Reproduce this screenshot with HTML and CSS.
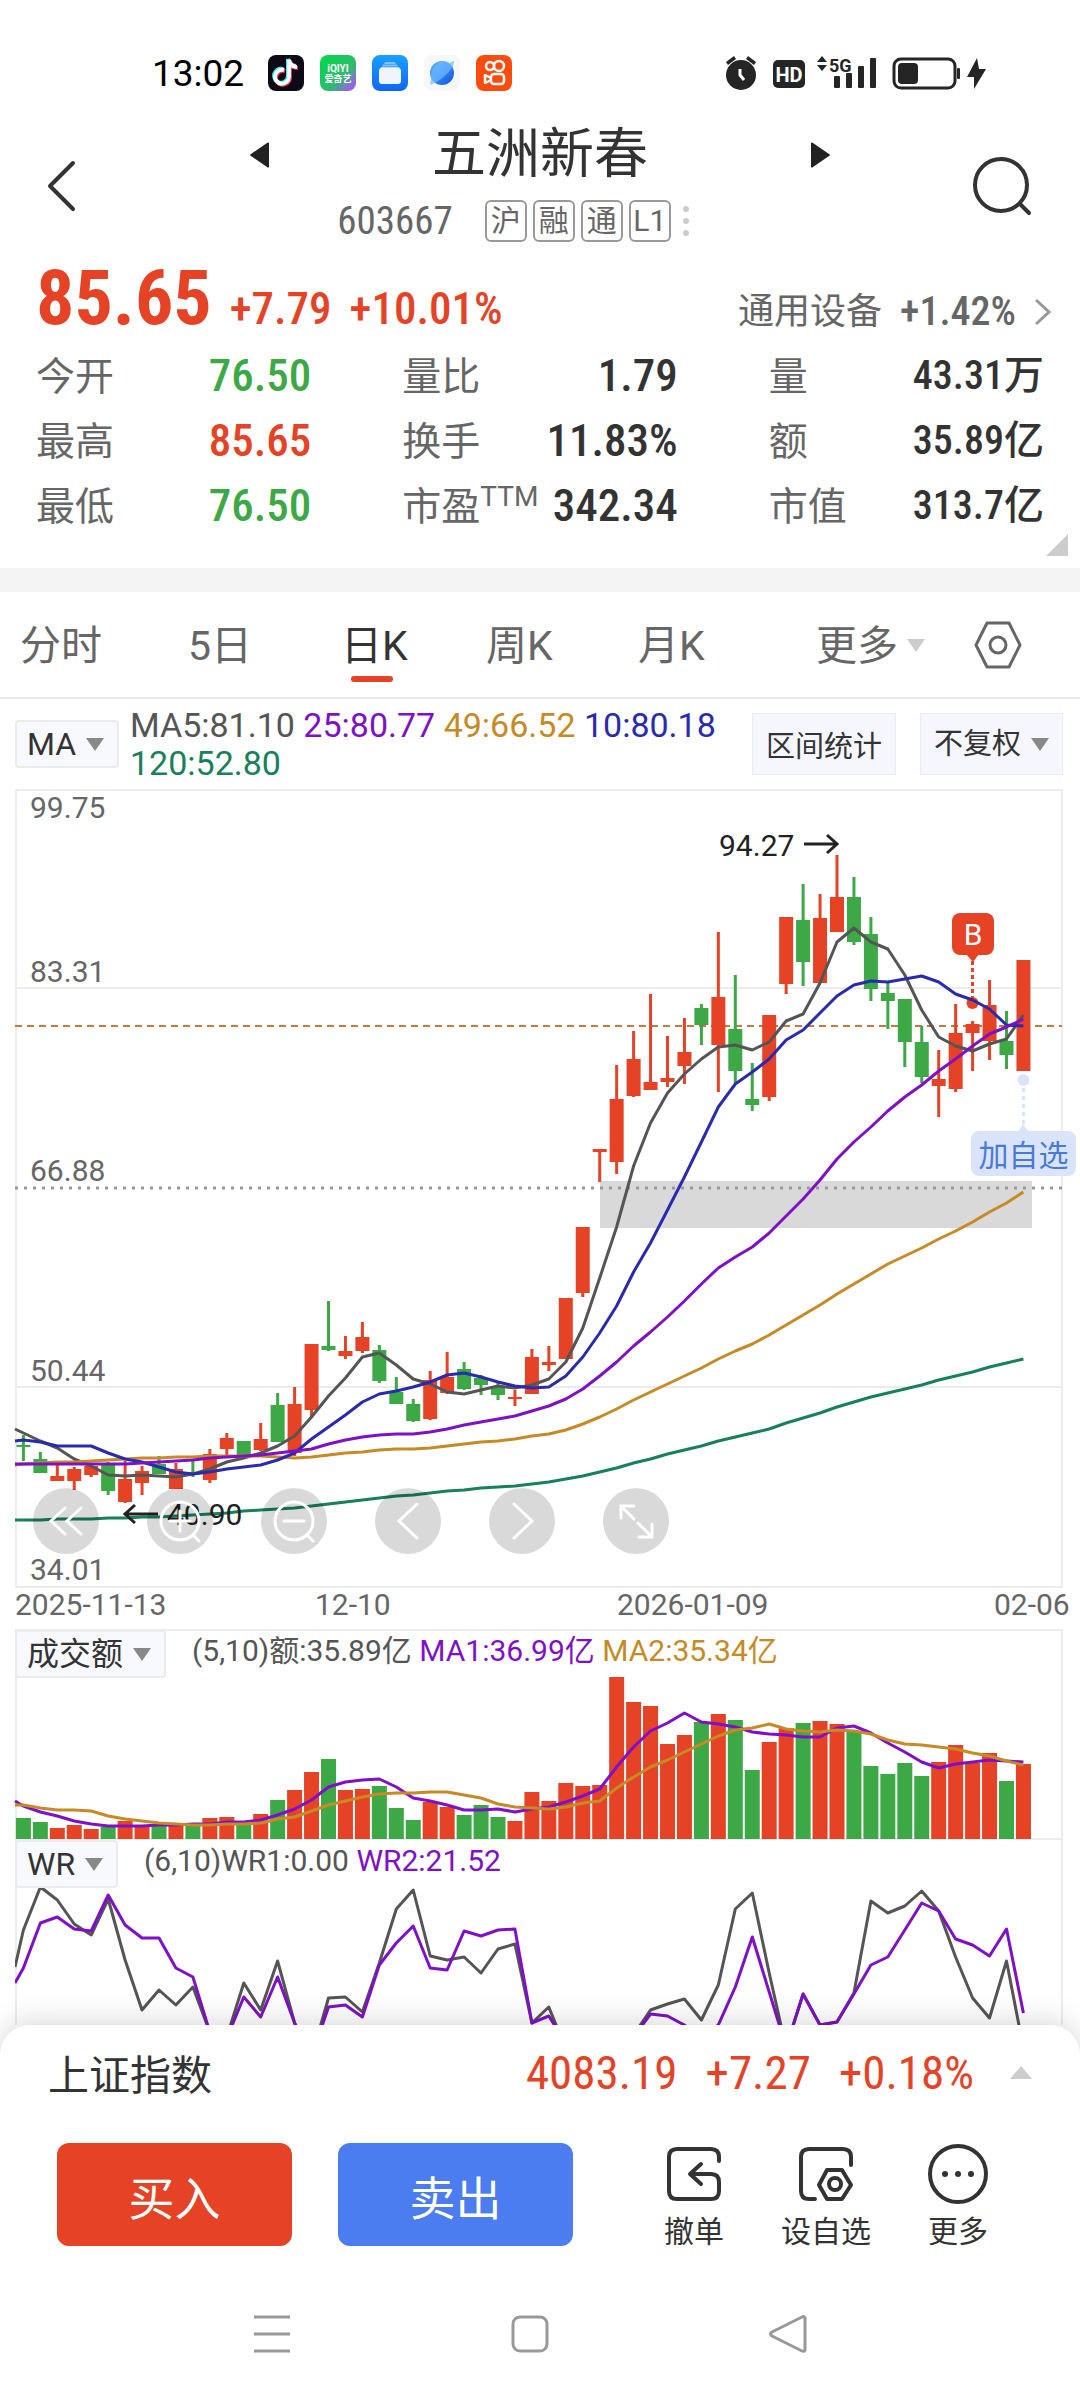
FILE: index.html
```html
<!DOCTYPE html>
<html lang="zh-CN">
<head>
    <meta charset="UTF-8">
    <meta name="viewport" content="width=device-width">
    <title>五洲新春 603667</title>
    <link rel="stylesheet" href="styles.css">
</head>
<body>
    <div class="status-bar">
        <span class="time">13:02</span>
        <div class="app-icons">
            <svg viewBox="0 0 36 36">
                <rect width="36" height="36" rx="8" fill="#0b0a16"/>
                <g fill="none" stroke-width="4">
                    <path d="M16 15a7 7 0 1 0 5 7V5c1 5 4 7 8 7" stroke="#25f4ee" transform="translate(-1 -1)"/>
                    <path d="M16 15a7 7 0 1 0 5 7V5c1 5 4 7 8 7" stroke="#fe2c55" transform="translate(1 1)"/>
                    <path d="M16 15a7 7 0 1 0 5 7V5c1 5 4 7 8 7" stroke="#fff"/>
                </g>
            </svg>
            <svg viewBox="0 0 36 36">
                <defs>
                    <linearGradient id="gGreen" x1="0" y1="0" x2="1" y2="1">
                        <stop offset="0" stop-color="#00d84b"/>
                        <stop offset=".6" stop-color="#2bbd6a"/>
                        <stop offset=".85" stop-color="#8d6be0"/>
                        <stop offset="1" stop-color="#b04cf0"/>
                    </linearGradient>
                </defs>
                <rect width="36" height="36" rx="8" fill="url(#gGreen)"/>
                <text class="app-name" x="18" y="17" font-size="10">iQIYI</text>
                <text class="app-name" x="18" y="27" font-size="9">爱奇艺</text>
            </svg>
            <svg viewBox="0 0 36 36">
                <defs>
                    <linearGradient id="gBlue" x1="0" y1="0" x2="0" y2="1">
                        <stop offset="0" stop-color="#1aa0ff"/>
                        <stop offset="1" stop-color="#0f66f5"/>
                    </linearGradient>
                </defs>
                <rect width="36" height="36" rx="8" fill="url(#gBlue)"/>
                <path d="M13 7h10l1 2H12zM11 9.500h14l1 2H10z" fill="#7cc4ff"/>
                <path d="M9 12h18l1 2H8z" fill="#b5dcff"/>
                <rect x="7" y="13" width="22" height="16" rx="3" fill="#eef5ff"/>
            </svg>
            <svg viewBox="0 0 36 36">
                <defs>
                    <linearGradient id="gPlanet" x1="0" y1="0" x2="1" y2="1">
                        <stop offset="0" stop-color="#5fb2ff"/>
                        <stop offset="1" stop-color="#0a55e0"/>
                    </linearGradient>
                </defs>
                <rect width="36" height="36" rx="8" fill="#f6f7f9"/>
                <circle cx="18" cy="18" r="12" fill="url(#gPlanet)"/>
                <path d="M30 6c1 7-11 18-23 24-1-1-1-3 0-5C6 15 12 7 18 6c4 0 6 1 8 2 2-2 3-2 4-2z" fill="#6fbcff" opacity=".7"/>
            </svg>
            <svg viewBox="0 0 36 36">
                <rect width="36" height="36" rx="8" fill="#fc4c0d"/>
                <g fill="none" stroke="#fff" stroke-width="2.500" stroke-linejoin="round">
                    <circle cx="14" cy="11" r="4"/>
                    <circle cx="23" cy="11" r="5"/>
                    <rect x="15" y="19" width="13" height="10" rx="3"/>
                    <path d="M15 23l-6-3v8l6-3"/>
                </g>
            </svg>
        </div>
        <svg class="system-icons" viewBox="0 0 270 40">
            <g fill="#252525">
                <circle cx="19" cy="22" r="15"/>
                <path d="M4 9l8-6 2 3-8 6zM34 9l-8-6-2 3 8 6z"/>
                <rect x="51" y="7" width="32" height="28" rx="5"/>
                <path d="M95 9l5-6 5 6zM95 12l5 6 5-6z"/>
                <rect x="112" y="23" width="6" height="12" rx="1"/>
                <rect x="124" y="20" width="6" height="15" rx="1"/>
                <rect x="136" y="13" width="6" height="22" rx="1"/>
                <rect x="148" y="5" width="6" height="30" rx="1"/>
                <rect x="176" y="10" width="20" height="21" rx="4"/>
                <rect x="235" y="15" width="3" height="11" rx="1"/>
                <path d="M255 5l-10 19h7v12l12-20h-7z"/>
            </g>
            <path d="M18 16v6l4 5" fill="none" stroke="#fff" stroke-width="3"/>
            <rect x="172" y="6" width="61" height="29" rx="7" fill="none" stroke="#252525" stroke-width="3"/>
            <text x="67" y="29" font-size="20" font-weight="700" fill="#fff" text-anchor="middle">HD</text>
            <text x="107" y="19" font-size="18" font-weight="700" fill="#252525">5G</text>
        </svg>
    </div>

    <header class="header">
        <a class="icon-link" href="#" aria-label="返回">
            <svg width="56" height="60" viewBox="0 0 56 60"><path d="M35 7L12 30l23 23"/></svg>
        </a>
        <div class="title-box">
            <div class="title-row">
                <button class="turn" aria-label="上一只"><svg width="24" height="30" viewBox="0 0 24 30"><path d="M22 3v24q-1 1-2 0L4 16q-2-1 0-2L20 3q1-1 2 0z"/></svg></button>
                <h1>五洲新春</h1>
                <button class="turn" aria-label="下一只"><svg width="24" height="30" viewBox="0 0 24 30"><path d="M2 3v24q1 1 2 0l16-11q2-1 0-2L4 3q-1-1-2 0z"/></svg></button>
            </div>
            <div class="code-row">
                <span class="code">603667</span>
                <ul class="tags">
                    <li>沪</li>
                    <li>融</li>
                    <li>通</li>
                    <li>L1</li>
                </ul>
                <span class="dots"><i></i><i></i><i></i></span>
            </div>
        </div>
        <a class="icon-link search" href="#" aria-label="搜索">
            <svg width="60" height="60" viewBox="0 0 60 60"><circle cx="29" cy="29" r="26"/><path d="M48 48l9 9"/></svg>
        </a>
    </header>

    <section class="quote">
        <div class="price-row">
            <strong class="price">85.65</strong>
            <span class="change">+7.79</span>
            <span class="change">+10.01%</span>
            <a class="industry" href="#">
                <span>通用设备</span>
                <b>+1.42%</b>
                <svg width="18" height="28" viewBox="0 0 18 28"><path d="M2 2l13 12L2 26"/></svg>
            </a>
        </div>
        <dl class="detail">
            <div><dt>今开</dt><dd class="down">76.50</dd></div>
            <div><dt>量比</dt><dd>1.79</dd></div>
            <div><dt>量</dt><dd class="amount">43.31万</dd></div>
            <div><dt>最高</dt><dd class="up">85.65</dd></div>
            <div><dt>换手</dt><dd>11.83%</dd></div>
            <div><dt>额</dt><dd class="amount">35.89亿</dd></div>
            <div><dt>最低</dt><dd class="down">76.50</dd></div>
            <div><dt>市盈<sup>TTM</sup></dt><dd>342.34</dd></div>
            <div><dt>市值</dt><dd class="amount">313.7亿</dd></div>
        </dl>
        <i class="corner"></i>
    </section>

    <nav class="tabs">
        <button>分时</button>
        <button>5日</button>
        <button class="selected">日K</button>
        <button>周K</button>
        <button>月K</button>
        <span class="picker picker-more">
            <select aria-label="更多周期"><option>更多</option></select>
        </span>
        <button aria-label="设置">
            <svg width="50" height="50" viewBox="0 0 50 50"><path d="M14 2h22l11 22-11 22H14L3 24z"/><circle cx="25" cy="24" r="8"/></svg>
        </button>
    </nav>

    <section class="charts">
        <div class="ma-row">
            <span class="picker picker-box">
                <select aria-label="主图指标"><option>MA</option></select>
            </span>
            <p class="legend">
                <span class="c-ma5">MA5:81.10</span>
                <span class="c-ma25">25:80.77</span>
                <span class="c-ma49">49:66.52</span>
                <span class="c-ma10">10:80.18</span>
                <span class="c-ma120">120:52.80</span>
            </p>
            <button class="range-btn">区间统计</button>
            <span class="picker picker-right">
                <select aria-label="复权方式"><option>不复权</option></select>
            </span>
        </div>

        <div class="k-box">
            <svg id="k-chart" class="chart" viewBox="0 0 1048 799"></svg>
            <div class="tools">
                <button aria-label="最左"><svg viewBox="0 0 66 66"><path d="M32 20L18 33l14 13M48 20L34 33l14 13"/></svg></button>
                <button aria-label="放大"><svg viewBox="0 0 66 66"><circle cx="33" cy="33" r="19"/><path d="M33 23v20M23 33h20M46 47l6 6"/></svg></button>
                <button aria-label="缩小"><svg viewBox="0 0 66 66"><circle cx="33" cy="33" r="19"/><path d="M23 33h20M46 47l6 6"/></svg></button>
                <button aria-label="左移"><svg viewBox="0 0 66 66"><path d="M42 16L24 33l18 17"/></svg></button>
                <button aria-label="右移"><svg viewBox="0 0 66 66"><path d="M25 16l18 17-18 17"/></svg></button>
                <button aria-label="全屏"><svg viewBox="0 0 66 66"><path d="M18 30V18h13M18 18l13 13M49 36v13H36M49 49L35 35"/></svg></button>
            </div>
        </div>
        <div class="dates">
            <span>2025-11-13</span>
            <span>12-10</span>
            <span>2026-01-09</span>
            <span>02-06</span>
        </div>

        <div class="sub-box">
            <div class="sub-head">
                <span class="picker picker-box">
                    <select aria-label="副图指标一"><option>成交额</option></select>
                </span>
                <p class="sub-legend">
                    <span class="c-ma5">(5,10)额:35.89亿</span>
                    <span class="c-ma25">MA1:36.99亿</span>
                    <span class="c-ma49">MA2:35.34亿</span>
                </p>
            </div>
            <svg id="vol-chart" class="chart" viewBox="0 0 1048 210"></svg>
        </div>
        <div class="sub-box">
            <div class="sub-head">
                <span class="picker picker-box">
                    <select aria-label="副图指标二"><option>WR</option></select>
                </span>
                <p class="sub-legend">
                    <span class="c-ma5">(6,10)WR1:0.00</span>
                    <span class="c-ma25">WR2:21.52</span>
                </p>
            </div>
            <svg id="wr-chart" class="chart clip" viewBox="0 0 1048 186"></svg>
        </div>
    </section>

    <footer class="sheet">
        <div class="index-row">
            <span class="index-name">上证指数</span>
            <span class="index-num">4083.19</span>
            <span class="index-num">+7.27</span>
            <span class="index-num">+0.18%</span>
            <i class="tri-up"></i>
        </div>
        <div class="actions">
            <button class="trade buy">买入</button>
            <button class="trade sell">卖出</button>
            <div class="links">
                <a href="#">
                    <svg width="62" height="62" viewBox="0 0 62 62"><path d="M56 18v-4q0-8-8-8H14q-8 0-8 8v34q0 8 8 8h34q8 0 8-8V39q0-8-8-8H28M38 21L27 31l11 10"/></svg>
                    撤单
                </a>
                <a href="#">
                    <svg width="62" height="62" viewBox="0 0 62 62"><path d="M56 22v-8q0-8-8-8H14q-8 0-8 8v34q0 8 8 8h6"/><path d="M32 27h15l9 15-9 14H32l-8-14z"/><circle cx="40" cy="41" r="6"/></svg>
                    设自选
                </a>
                <a href="#">
                    <svg width="62" height="62" viewBox="0 0 62 62"><circle cx="31" cy="31" r="28"/><path d="M18 31h0.010M31 31h0.010M44 31h0.010" stroke-width="6"/></svg>
                    更多
                </a>
            </div>
        </div>
        <div class="sys-nav">
            <button aria-label="最近任务"><svg width="40" height="40" viewBox="0 0 40 40"><path d="M2 3h36M2 20h36M2 37h36"/></svg></button>
            <button aria-label="主屏幕"><svg width="40" height="40" viewBox="0 0 40 40"><rect x="3" y="3" width="34" height="34" rx="7"/></svg></button>
            <button aria-label="后退"><svg width="40" height="40" viewBox="0 0 40 40"><path d="M37 4v32q-1 2-3 1L4 22q-3-2 0-4L34 3q2-1 3 1z"/></svg></button>
        </div>
    </footer>
    <script src="chart.js"></script>
</body>
</html>
```
FILE: styles.css
```css
*{
    margin: 0;
    padding: 0;
    box-sizing: border-box;
}
body{
    background: #fff;
    color: #333;
    font-family: Roboto, "Noto Sans CJK SC", sans-serif;
    font-size: 30px;
}
ul{
    list-style: none;
}
a{
    color: inherit;
    text-decoration: none;
}
button, select{
    border: 0;
    background: none;
    color: inherit;
    font: inherit;
    cursor: pointer;
}
svg{
    display: block;
}

/*状态栏*/
.status-bar{
    display: flex;
    align-items: center;
    height: 112px;
    padding: 34px 88px 0 152px;
}
.time{
    color: #000;
    font-size: 37px;
}
.app-icons{
    display: flex;
    gap: 16px;
    margin-left: 24px;
}
.app-icons svg{
    width: 36px;
    height: 36px;
}
.app-name{
    fill: #fff;
    font-weight: 700;
    text-anchor: middle;
}
.system-icons{
    width: 270px;
    height: 40px;
    margin-left: auto;
}

/*标题*/
.header{
    display: flex;
    justify-content: space-between;
    align-items: center;
    height: 148px;
    padding: 0 48px 0 38px;
}
.icon-link svg{
    fill: none;
    stroke: #333;
    stroke-width: 4;
    stroke-linecap: round;
    stroke-linejoin: round;
}
.icon-link:first-child{
    width: 70px;
}
.title-box{
    width: 586px;
}
.title-row{
    display: flex;
    justify-content: space-between;
    align-items: center;
    height: 70px;
}
.title-row h1{
    font-size: 54px;
    font-weight: 400;
    line-height: 70px;
}
.turn svg{
    fill: #222;
}
.code-row{
    display: flex;
    justify-content: center;
    align-items: center;
    height: 62px;
    padding-right: 54px;
}
.code{
    color: #666;
    font-family: "Roboto Condensed", Roboto, sans-serif;
    font-size: 39px;
}
.tags{
    display: flex;
    gap: 6px;
    margin-left: 32px;
}
.tags li{
    width: 42px;
    height: 42px;
    border: 2px solid #999;
    border-radius: 6px;
    color: #666;
    font-size: 30px;
    line-height: 38px;
    text-align: center;
}
.dots{
    display: flex;
    flex-direction: column;
    gap: 6px;
    margin-left: 12px;
}
.dots i{
    width: 6px;
    height: 6px;
    border-radius: 50%;
    background: #ccc;
}

/*行情*/
.quote{
    position: relative;
    padding: 0 36px 28px 36px;
    border-bottom: 24px solid #f4f4f4;
}
.price-row{
    display: flex;
    align-items: baseline;
    height: 85px;
    line-height: 76px;
    color: #e64326;
    font-family: "Roboto Condensed", Roboto, "Noto Sans CJK SC", sans-serif;
}
.price{
    font-size: 76px;
    font-weight: 700;
}
.change{
    margin-left: 18px;
    font-size: 45px;
    font-weight: 500;
}
.industry{
    display: flex;
    align-items: center;
    margin-left: auto;
    margin-right: -8px;
    color: #666;
    font-size: 36px;
}
.industry b{
    margin: 0 18px;
    font-size: 40px;
    font-weight: 500;
}
.industry svg{
    fill: none;
    stroke: #999;
    stroke-width: 3;
}
.detail{
    display: grid;
    grid-template-columns: repeat(3, 1fr);
    column-gap: 91px;
}
.detail div{
    display: flex;
    justify-content: space-between;
    height: 65px;
    line-height: 65px;
    white-space: nowrap;
}
.detail dt{
    color: #666;
    font-size: 39px;
}
.detail sup{
    font-size: 28px;
    line-height: 0;
}
.detail dd{
    font-family: "Roboto Condensed", Roboto, "Noto Sans CJK SC", sans-serif;
    font-size: 45px;
    font-weight: 500;
    line-height: 62px;
}
.detail .amount{
    font-size: 40px;
}
.detail .up{
    color: #e64326;
}
.detail .down{
    color: #3da846;
}
.corner{
    position: absolute;
    right: 12px;
    bottom: 12px;
    border-left: 22px solid transparent;
    border-bottom: 22px solid #ccc;
}

/*周期*/
.tabs{
    display: grid;
    grid-template-columns: 168fr 153fr 145fr 152fr 178fr 157fr 107fr;
    align-items: center;
    justify-items: start;
    height: 107px;
    padding: 2px 0 0 20px;
    border-bottom: 2px solid #e8e8e8;
    color: #666;
    font-size: 41px;
}
.tabs button{
    position: relative;
    line-height: 60px;
}
.tabs .selected{
    color: #333;
}
.tabs .selected::after{
    content: "";
    position: absolute;
    left: 10px;
    bottom: -6px;
    width: 42px;
    height: 6px;
    border-radius: 3px;
    background: #e64326;
}
.tabs svg{
    fill: none;
    stroke: #666;
    stroke-width: 3;
    stroke-linejoin: round;
}

/*下拉框*/
.picker{
    display: inline-flex;
    align-items: center;
    white-space: nowrap;
}
.picker select{
    appearance: none;
    outline: none;
}
.picker::after{
    content: "";
    margin-left: 9px;
    border: 9px solid transparent;
    border-top: 13px solid #888;
    border-bottom: 0;
    pointer-events: none;
}
.picker-more::after{
    border-top-color: #ccc;
}
.picker-box{
    height: 48px;
    padding: 0 13px 0 10px;
    border: 2px solid #ebebee;
    border-radius: 4px;
    background: #f8f9ff;
    font-size: 32px;
}
.range-btn, .picker-right{
    height: 62px;
    padding: 0 13px;
    border: 1px solid #ececf2;
    background: #f6f7fe;
    font-size: 29px;
    white-space: nowrap;
}

/*图表*/
.charts{
    padding: 0 17px 0 15px;
}
.ma-row{
    display: flex;
    align-items: center;
    height: 90px;
}
.legend{
    flex: 1;
    padding-left: 11px;
    font-size: 34px;
    line-height: 38px;
}
.range-btn{
    margin-right: 24px;
}
.c-ma5{
    color: #555;
}
.c-ma10{
    color: #2a2ab0;
}
.c-ma25{
    color: #8010c8;
}
.c-ma49{
    color: #c78a25;
}
.c-ma120{
    color: #17805c;
}
.chart{
    width: 100%;
    height: auto;
    overflow: visible;
}
.chart.clip{
    overflow: hidden;
}
.grid{
    fill: none;
    stroke: #ececec;
    stroke-width: 2;
}
.line{
    fill: none;
    stroke-width: 3;
    stroke: #555;
    stroke-linejoin: round;
}
.s-ma10{
    stroke: #2a2ab0;
}
.s-ma25{
    stroke: #8010c8;
}
.s-ma49{
    stroke: #c78a25;
}
.s-ma120{
    stroke: #17805c;
}
.rise{
    fill: #e64326;
}
.fall{
    fill: #3da846;
}
.axis{
    fill: #666;
}
.note{
    fill: #222;
}
.k-box{
    position: relative;
}
.tools{
    position: absolute;/*悬浮在K线图上*/
    left: 18px;
    bottom: 34px;
    display: flex;
    gap: 48px;
}
.tools button{
    width: 66px;
    height: 66px;
    border-radius: 50%;
    background: rgba(0,0,0,0.15);
}
.tools svg{
    fill: none;
    stroke: #fff;
    stroke-width: 3;
    stroke-linecap: round;
}
.dates{
    display: grid;
    grid-template-columns: 300fr 302fr 377fr 77fr;
    height: 41px;
    margin-right: -8px;
    line-height: 34px;
    color: #666;
}
.sub-box{
    position: relative;
}
.sub-head{
    position: absolute;/*盖在副图上方*/
    left: 0;
    top: 1px;
    display: flex;
}
.sub-legend{
    padding-left: 26px;
    line-height: 42px;
}

/*底部*/
.sheet{
    position: relative;
    border-radius: 30px 30px 0 0;
    background: #fff;
    box-shadow: 0 -4px 30px rgba(0,0,0,0.15);
}
.index-row{
    display: flex;
    align-items: center;
    height: 94px;
    padding: 0 48px;
}
.index-name{
    margin-right: auto;
    font-size: 41px;
}
.index-num{
    margin-right: 28px;
    color: #e64326;
    font-family: "Roboto Condensed", Roboto, sans-serif;
    font-size: 47px;
}
.tri-up{
    margin-left: 8px;
    border: 11px solid transparent;
    border-bottom: 13px solid #ccc;
    border-top: 0;
}
.actions{
    display: flex;
    align-items: flex-start;
    padding: 24px 57px 0;
}
.trade{
    flex: 0 0 235px;
    height: 103px;
    margin-right: 46px;
    border-radius: 12px;
    color: #fff;
    font-size: 46px;
}
.buy{
    background: #e64326;
}
.sell{
    background: #4b7cf0;
}
.links{
    display: flex;
    flex: 1;
    justify-content: space-between;
    padding: 0 34px 0 44px;
}
.links a{
    display: flex;
    flex-direction: column;
    align-items: center;
    line-height: 48px;
    white-space: nowrap;
}
.links svg{
    margin-bottom: 3px;
    fill: none;
    stroke: #333;
    stroke-width: 4;
    stroke-linecap: round;
    stroke-linejoin: round;
}
.sys-nav{
    display: flex;
    justify-content: space-between;
    padding: 58px 272px 44px 252px;
}
.sys-nav svg{
    fill: none;
    stroke: #999;
    stroke-width: 3;
}
```
FILE: chart.js
```js
//画布坐标：每根K线间隔STEP，第一根中心在START
var NS = 'http://www.w3.org/2000/svg';
var START = 8.4;
var STEP = 16.95;

//[涨1跌0, 最高, 实体上沿, 实体下沿, 最低]
var candles = [
    [0,646,656,658,672],[0,663,670,684,684],[1,673,687,692,692],[1,678,680,692,701],[1,676,677,686,688],
    [0,673,676,702,706],[1,672,690,713,714],[1,677,682,694,706],[0,667,675,685,685],[1,674,680,700,700],
    [0,671,683,685,688],[1,660,665,691,694],[1,644,649,660,667],[0,652,652,667,667],[1,634,650,661,662],
    [0,604,616,653,653],[1,598,615,664,667],[1,555,555,621,629],[0,512,557,561,562],[1,547,562,567,570],
    [1,533,548,562,564],[0,556,561,592,594],[0,588,603,615,615],[0,610,615,632,633],[1,582,591,630,631],
    [1,563,588,604,605],[0,573,580,600,601],[0,586,589,596,606],[0,594,598,606,611],[1,601,608,610,617],
    [1,560,568,605,605],[1,557,573,576,582],[1,509,509,570,570],[1,438,438,504,508],[1,360,360,363,393],
    [1,276,310,373,385],[1,242,270,307,308],[1,205,293,301,301],[1,247,289,293,298],[1,229,263,277,295],
    [0,215,219,236,256],[1,143,208,256,303],[0,186,240,282,294],[0,274,310,316,322],[1,226,226,308,312],
    [1,128,128,195,205],[0,95,131,173,197],[1,105,129,194,194],[1,66,108,143,143],[0,88,108,153,156],
    [0,128,145,200,212],[0,193,204,212,240],[0,210,210,253,278],[0,237,253,288,294],[1,261,290,297,328],
    [1,215,244,300,303],[1,232,235,244,282],[1,191,216,252,271],[0,222,252,266,280],[1,171,171,282,282]
];
//均线，第一个点落在左边框上
var ma5 = [640,644,652,659,670,677,686,687,686,687,688,685,680,673,669,664,657,647,628,607,589,568,564,576,590,595,603,605,601,597,599,596,590,573,539,489,438,377,334,304,285,270,258,256,261,253,232,225,194,153,139,153,160,186,221,248,257,262,255,250,226];
var ma10 = [652,651,653,657,657,657,664,670,673,678,683,685,683,680,678,676,671,664,650,638,626,613,605,602,598,593,586,584,588,593,597,599,598,587,568,544,517,483,454,421,388,353,318,295,283,270,251,241,224,207,196,192,193,190,187,193,205,211,220,236,237];
var ma25 = [675,675,675,675,675,675,675,675,674,673,672,671,669,668,667,666,664,662,660,655,651,648,646,645,645,643,640,636,633,630,627,622,617,610,600,587,573,557,543,528,512,495,479,468,458,444,427,410,391,370,353,338,322,308,296,282,270,257,245,238,230];
var ma49 = [676,675,674,673,673,672,671,670,669,669,668,668,667,667,667,667,668,669,668,666,664,663,661,660,660,659,657,655,653,652,650,647,645,641,635,628,620,611,603,595,587,579,570,562,555,546,536,526,516,505,495,485,475,467,459,450,442,433,423,414,403];
var ma120 = [731,731,731,730,730,730,729,729,728,728,727,726,725,724,722,721,720,719,717,715,713,711,709,707,706,704,702,701,699,698,697,695,693,690,687,683,679,674,670,665,661,657,652,648,644,640,634,629,624,618,613,608,604,600,596,591,587,583,578,574,570];

//成交额
var vol = [21,17,11,14,10,12,18,13,13,13,13,21,22,14,25,39,49,67,80,49,50,53,31,19,37,32,24,34,22,18,47,38,56,53,54,162,137,133,95,104,117,125,119,69,97,111,116,118,115,107,73,65,76,63,77,94,76,86,58,75];
var vol5 = [38,33,27,23,18,15,13,13,13,14,14,15,15,17,17,19,24,30,39,52,57,59,60,52,41,38,34,29,29,30,27,30,32,37,43,50,72,92,108,116,126,117,115,112,107,105,104,102,102,111,113,106,96,87,77,71,75,77,79,78,77];
var vol10 = [34,34,31,29,29,28,23,20,18,16,15,14,14,15,15,16,20,22,28,34,38,42,45,46,46,47,47,44,41,35,32,31,30,32,36,38,51,62,72,79,87,95,103,109,111,115,110,108,107,109,108,105,99,95,94,92,90,86,83,78,74];

//WR指标
var wr1 = [128,91,48,61,85,96,60,121,171,151,166,148,193,198,144,171,122,184,218,159,158,173,124,70,51,117,121,118,134,110,105,184,168,210,218,218,218,196,171,165,160,181,146,70,54,134,209,155,186,183,154,62,74,67,52,72,118,159,179,122,209];
var wr2 = [144,129,84,78,90,92,56,86,99,99,129,138,193,199,158,178,138,184,218,168,166,178,126,104,87,129,131,92,97,91,90,184,177,204,218,218,218,198,175,177,186,199,186,148,98,153,208,155,186,183,155,126,118,91,64,72,100,106,117,90,174];

function add(svg, name, attrs, text) {
    var el = document.createElementNS(NS, name);
    for(var key in attrs){
        el.setAttribute(key, attrs[key]);
    }
    if(text){
        el.textContent = text;
    }
    svg.appendChild(el);
    return el;
}
function rect(svg, cls, x, y, w, h) {
    add(svg, 'rect', {'class': cls, x: x, y: y, width: w, height: h});
}
function centerX(i) {
    return START + STEP * i;
}
function line(svg, cls, data, base) {//base有值时数据为距底边的高度
    var points = [];
    for(var i=0; i<data.length; i++){
        var x = i == 0 ? 0 : centerX(i - 1);
        points.push(x.toFixed(1) + ',' + (base ? base - data[i] : data[i]));
    }
    add(svg, 'polyline', {'class': 'line ' + cls, points: points.join(' ')});
}

function drawK() {
    var svg = document.getElementById('k-chart');
    add(svg, 'path', {'class': 'grid', d: 'M1 1H1047V798H1V1M1 199H1047M1 598H1047'});
    add(svg, 'path', {d: 'M0 237H1047', stroke: '#c77a3a', 'stroke-width': 2, 'stroke-dasharray': '7 5'});
    add(svg, 'rect', {x: 585, y: 392, width: 432, height: 47, fill: '#d9d9d9'});
    add(svg, 'path', {d: 'M0 399H1047', stroke: '#999', 'stroke-width': 3, 'stroke-dasharray': '3 6'});

    for(var i=0; i<candles.length; i++){
        var c = candles[i];
        var cls = c[0] ? 'rise' : 'fall';
        rect(svg, cls, centerX(i) - 1.5, c[1], 3, c[4] - c[1]);
        rect(svg, cls, centerX(i) - 7, c[2], 14, c[3] - c[2]);
    }
    //买点标记
    add(svg, 'path', {d: 'M957.500 172V212', stroke: '#e64326', 'stroke-width': 3, 'stroke-dasharray': '4 3'});
    add(svg, 'circle', {'class': 'rise', cx: 957.5, cy: 214, r: 6});
    line(svg, '', ma5);
    line(svg, 's-ma49', ma49);
    line(svg, 's-ma120', ma120);
    line(svg, 's-ma10', ma10);
    line(svg, 's-ma25', ma25);
    add(svg, 'rect', {'class': 'rise', x: 937, y: 124, width: 42, height: 42, rx: 8});
    add(svg, 'path', {'class': 'rise', d: 'M951 165h13l-6 8z'});
    add(svg, 'text', {x: 958, y: 156, 'font-size': 30, fill: '#fff', 'text-anchor': 'middle'}, 'B');

    //加自选标记
    add(svg, 'circle', {cx: 1008.5, cy: 291, r: 6, fill: '#d9e4fb'});
    add(svg, 'path', {d: 'M1008.500 299V336', stroke: '#d9e4fb', 'stroke-width': 3, 'stroke-dasharray': '4 4'});
    add(svg, 'path', {d: 'M1003 343l5-8 6 8z', fill: '#d9e4fb'});
    add(svg, 'rect', {x: 956, y: 342, width: 105, height: 45, rx: 8, fill: '#d9e4fb'});
    add(svg, 'text', {x: 1008.5, y: 377, 'font-size': 30, fill: '#4a7ad8', 'text-anchor': 'middle'}, '加自选');

    var labels = [['99.75', 29], ['83.31', 193], ['66.88', 392], ['50.44', 592], ['34.01', 791]];
    for(var j=0; j<labels.length; j++){
        add(svg, 'text', {'class': 'axis', x: 15, y: labels[j][1]}, labels[j][0]);
    }
    add(svg, 'text', {'class': 'note', x: 704, y: 67}, '94.27');
    add(svg, 'path', {d: 'M789 55h32M812 46l10 9-10 9', fill: 'none', stroke: '#222', 'stroke-width': 3});
    add(svg, 'text', {'class': 'note', x: 152, y: 736}, '40.90');
    add(svg, 'path', {d: 'M143 725h-32M120 716l-10 9 10 9', fill: 'none', stroke: '#222', 'stroke-width': 3});
}

function drawVol() {
    var svg = document.getElementById('vol-chart');
    add(svg, 'path', {'class': 'grid', d: 'M1 210V1H1047V210H1'});
    for(var i=0; i<vol.length; i++){
        rect(svg, candles[i][0] ? 'rise' : 'fall', centerX(i) - 7.5, 210 - vol[i], 15, vol[i]);
    }
    line(svg, 's-ma25', vol5, 210);
    line(svg, 's-ma49', vol10, 210);
}

function drawWr() {
    var svg = document.getElementById('wr-chart');
    add(svg, 'path', {'class': 'grid', d: 'M1 0V200M1047 0V200'});
    line(svg, '', wr1);
    line(svg, 's-ma25', wr2);
}

drawK();
drawVol();
drawWr();
```
